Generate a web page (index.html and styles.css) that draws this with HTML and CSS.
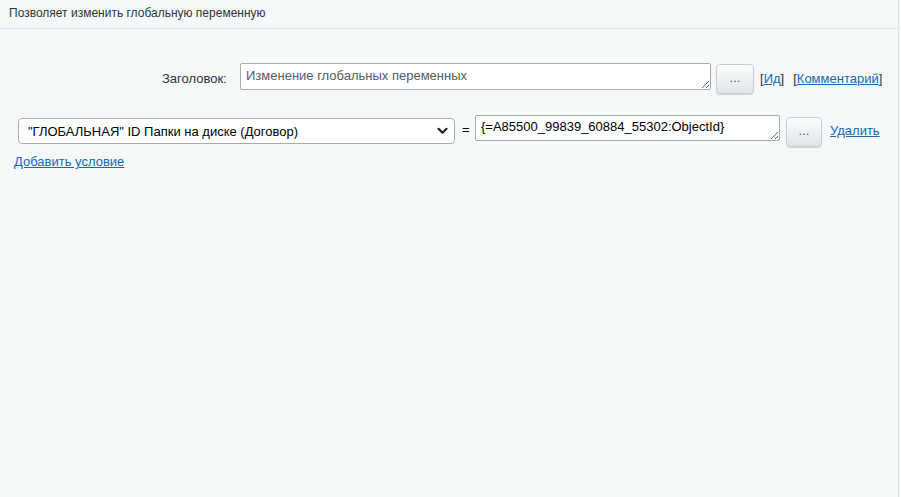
FILE: index.html
```html
<!DOCTYPE html>
<html lang="ru">
<head>
<meta charset="utf-8">
<link rel="stylesheet" href="styles.css">
</head>
<body>
<div class="page">
  <div class="header">Позволяет изменить глобальную переменную</div>
  <div class="row-title">
    <span class="label">Заголовок:</span>
    <textarea class="title-input">Изменение глобальных переменных</textarea>
    <button class="dots">...</button>
    <span class="bracket bracket-id">[<a href="#">Ид</a>]</span>
    <span class="bracket">[<a href="#">Комментарий</a>]</span>
  </div>
  <div class="row-cond">
    <div class="select-wrap">
      <select class="var-select"><option>"ГЛОБАЛЬНАЯ" ID Папки на диске (Договор)</option></select>
      <svg class="chevron" width="11" height="8" viewBox="0 0 11 8"><path d="M1.5 1.8 L5.5 5.8 L9.5 1.8" fill="none" stroke="#222" stroke-width="2.2" stroke-linecap="round" stroke-linejoin="round"/></svg>
    </div>
    <span class="eq">=</span>
    <textarea class="value-input">{=A85500_99839_60884_55302:ObjectId}</textarea>
    <button class="dots dots-small">...</button>
    <a href="#" class="del">Удалить</a>
  </div>
  <a href="#" class="add">Добавить условие</a>
</div>
</body>
</html>
```
FILE: styles.css
```css
html, body {
  margin: 0;
  padding: 0;
  background: #f5f9f9;
}
body {
  font-family: "Liberation Sans", Arial, sans-serif;
  color: #333;
  font-size: 13px;
}
.page {
  width: 898px;
  height: 497px;
  border-right: 1px solid #dfe5e5;
  box-sizing: content-box;
}
.header {
  height: 29px;
  box-sizing: border-box;
  padding: 6px 0 0 9px;
  font-size: 12px;
  color: #333;
  border-bottom: 1px solid #e1e7e8;
}
.row-title {
  display: flex;
  align-items: flex-start;
  padding-left: 162px;
  margin-top: 34px;
}
.label {
  width: 78px;
  padding-top: 8px;
  color: #333;
}
textarea {
  font-family: "Liberation Sans", Arial, sans-serif;
  font-size: 13px;
  color: #535c69;
  background: #fff;
  border: 1px solid #a5acb2;
  border-radius: 2px;
  box-sizing: border-box;
  margin: 0;
  resize: both;
  overflow: hidden;
}
.title-input {
  width: 471px;
  height: 27px;
  padding: 4px 5px;
}
.dots {
  width: 38px;
  height: 30px;
  margin: 1px 0 0 5px;
  padding: 0 0 4px;
  border: 1px solid #c6cdd3;
  border-radius: 4px;
  background: linear-gradient(#fcfdfd, #dfe6e8);
  box-shadow: 0 1px 1px rgba(0,0,0,0.15);
  color: #535c69;
  font-family: "Liberation Sans", Arial, sans-serif;
  font-size: 13px;
  font-weight: normal;
  box-sizing: border-box;
}
.bracket {
  padding-top: 8px;
  margin-left: 9px;
  color: #333;
}
.bracket-id {
  margin-left: 6px;
}
a {
  color: #2067b0;
  text-decoration: underline;
}
.row-cond {
  display: flex;
  align-items: flex-start;
  margin-top: 21px;
  padding-left: 18px;
}
.select-wrap {
  position: relative;
  margin-top: 3px;
}
.var-select {
  appearance: none;
  -webkit-appearance: none;
  width: 437px;
  height: 26px;
  box-sizing: border-box;
  border: 1px solid #a5acb2;
  border-radius: 4px;
  background: #fff;
  padding: 0 6px 0 9px;
  font-family: "Liberation Sans", Arial, sans-serif;
  font-size: 13px;
  color: #000;
  margin: 0;
}
.chevron {
  position: absolute;
  right: 7px;
  top: 9px;
}
.eq {
  margin: 7px 0 0 7px;
  width: 13px;
  color: #000;
}
.value-input {
  width: 305px;
  height: 26px;
  padding: 3px 5px;
  color: #000;
}
.dots-small {
  width: 36px;
  margin: 2px 0 0 6px;
}
.del {
  margin: 8px 0 0 8px;
}
.add {
  display: inline-block;
  margin: 7px 0 0 14px;
}
```
